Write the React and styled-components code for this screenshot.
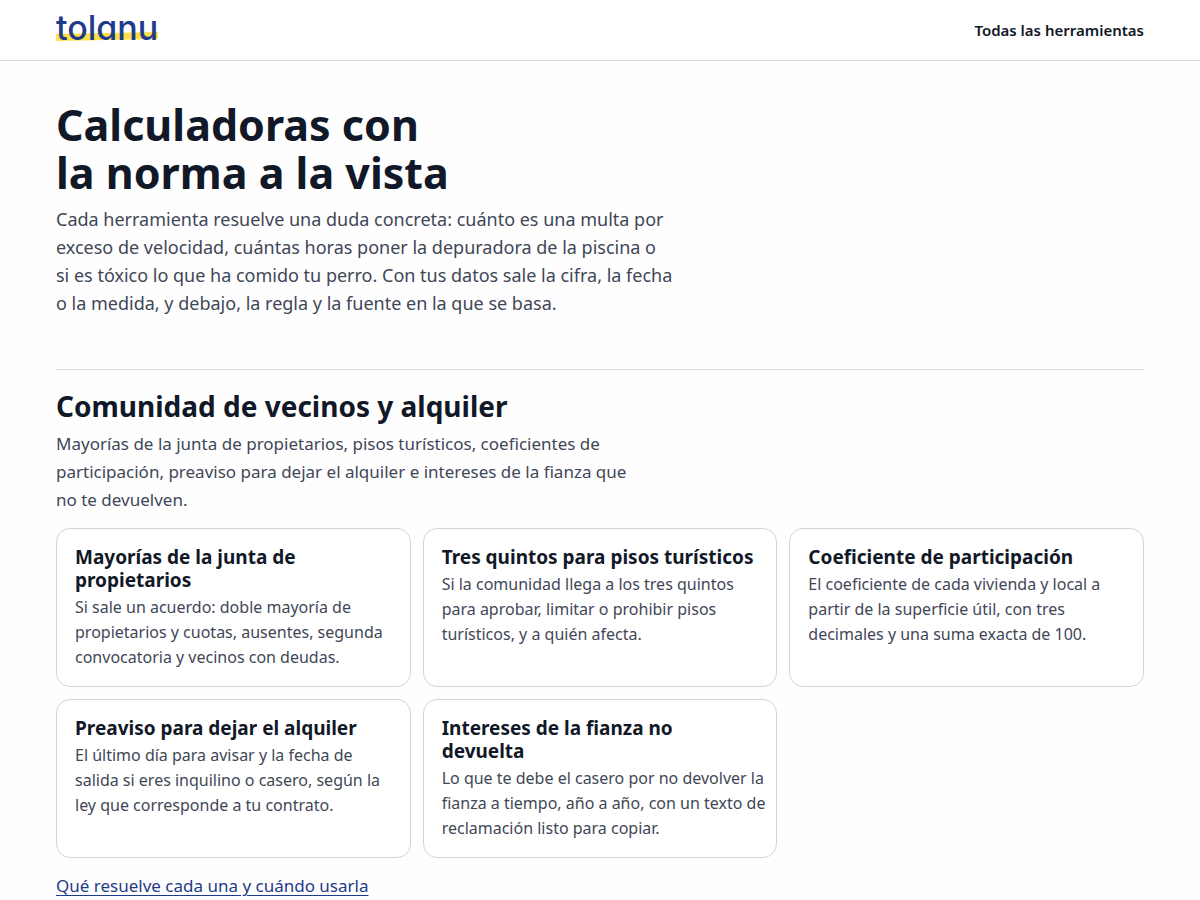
import React from "react";
import styled, { createGlobalStyle } from "styled-components";

const GlobalStyle = createGlobalStyle`
  * {
    box-sizing: border-box;
  }
  body {
    margin: 0;
    background: #fefefe;
    color: #111827;
    font-family: "Noto Sans", sans-serif;
    font-size: 17px;
    line-height: 28px;
  }
  h1, h2, h3, p {
    margin: 0;
  }
`;

const Header = styled.header`
  background: #fff;
  border-bottom: 1px solid #d6d8dd;
`;

const Wrap = styled.div`
  max-width: 1136px;
  margin: 0 auto;
  padding: 0 24px;
`;

const Bar = styled(Wrap)`
  display: flex;
  align-items: center;
  justify-content: space-between;
  height: 60px;
`;

const Logo = styled.a`
  position: relative;
  z-index: 0;
  padding-bottom: 4px;
  color: #1e3a8a;
  font-family: Inter, sans-serif;
  font-size: 34px;
  font-weight: 500;
  font-feature-settings: "cv11";
  line-height: 32px;
  text-decoration: none;
`;

const Marker = styled.svg`
  position: absolute;
  z-index: -1;
  left: 0;
  top: 20px;
  width: 100%;
  height: 9px;
`;

const NavLink = styled.a`
  color: #111827;
  font-size: 15px;
  font-weight: 600;
  text-decoration: none;
`;

const Hero = styled.section`
  padding: 40px 0 52px;
`;

const Title = styled.h1`
  font-size: 43px;
  line-height: 48px;
  font-weight: 700;
`;

const Lead = styled.p`
  max-width: 617px;
  margin-top: 8px;
  color: #3f4757;
  font-size: 18px;
`;

const Section = styled.section`
  border-top: 1px solid #d6d8dd;
  padding: 19px 0 40px;
`;

const SectionTitle = styled.h2`
  font-size: 28px;
  line-height: 34px;
  font-weight: 700;
`;

const Intro = styled.p`
  max-width: 580px;
  margin-top: 7px;
  color: #3f4757;
`;

const Grid = styled.div`
  display: grid;
  grid-template-columns: repeat(3, 1fr);
  gap: 12px;
  margin: 14px 0;

  @media (max-width: 900px) {
    grid-template-columns: repeat(2, 1fr);
  }
  @media (max-width: 600px) {
    grid-template-columns: 1fr;
  }
`;

const Card = styled.a`
  display: block;
  padding: 17px 10px 16px 18px;
  border: 1px solid #d1d5db;
  border-radius: 14px;
  background: #fff;
  color: #111827;
  text-decoration: none;
`;

const CardTitle = styled.h3`
  padding-right: 8px;
  font-size: 19px;
  line-height: 23px;
  font-weight: 700;
`;

const CardText = styled.p`
  margin-top: 3px;
  color: #3f4757;
  font-size: 16px;
  line-height: 25px;
`;

const MoreLink = styled.a`
  color: #1e3a8a;
  text-underline-offset: 3px;
`;

const tools = [
  {
    title: "Mayorías de la junta de propietarios",
    text: "Si sale un acuerdo: doble mayoría de propietarios y cuotas, ausentes, segunda convocatoria y vecinos con deudas.",
  },
  {
    title: "Tres quintos para pisos turísticos",
    text: "Si la comunidad llega a los tres quintos para aprobar, limitar o prohibir pisos turísticos, y a quién afecta.",
  },
  {
    title: "Coeficiente de participación",
    text: "El coeficiente de cada vivienda y local a partir de la superficie útil, con tres decimales y una suma exacta de 100.",
  },
  {
    title: "Preaviso para dejar el alquiler",
    text: "El último día para avisar y la fecha de salida si eres inquilino o casero, según la ley que corresponde a tu contrato.",
  },
  {
    title: "Intereses de la fianza no devuelta",
    text: "Lo que te debe el casero por no devolver la fianza a tiempo, año a año, con un texto de reclamación listo para copiar.",
  },
];

function App() {
  return (
    <>
      <GlobalStyle />
      <Header>
        <Bar>
          <Logo href="#">
            <Marker viewBox="0 0 104 9" preserveAspectRatio="none" aria-hidden="true">
              <path d="M0 2 L104 0 V7 L0 9 Z" fill="#fde047" />
            </Marker>
            tolanu
          </Logo>
          <NavLink href="#herramientas">Todas las herramientas</NavLink>
        </Bar>
      </Header>
      <Wrap as="main">
        <Hero>
          <Title>
            Calculadoras con
            <br />
            la norma a la vista
          </Title>
          <Lead>
            Cada herramienta resuelve una duda concreta: cuánto es una multa por
            exceso de velocidad, cuántas horas poner la depuradora de la piscina
            o si es tóxico lo que ha comido tu perro. Con tus datos sale la
            cifra, la fecha o la medida, y debajo, la regla y la fuente en la
            que se basa.
          </Lead>
        </Hero>
        <Section id="herramientas">
          <SectionTitle>Comunidad de vecinos y alquiler</SectionTitle>
          <Intro>
            Mayorías de la junta de propietarios, pisos turísticos, coeficientes
            de participación, preaviso para dejar el alquiler e intereses de la
            fianza que no te devuelven.
          </Intro>
          <Grid>
            {tools.map((tool) => (
              <Card href="#" key={tool.title}>
                <CardTitle>{tool.title}</CardTitle>
                <CardText>{tool.text}</CardText>
              </Card>
            ))}
          </Grid>
          <MoreLink href="#">Qué resuelve cada una y cuándo usarla</MoreLink>
        </Section>
      </Wrap>
    </>
  );
}

export default App;
